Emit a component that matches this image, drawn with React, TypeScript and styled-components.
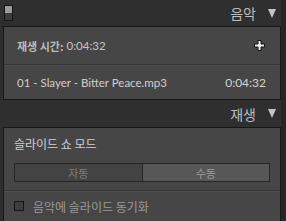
import React from "react";
import styled, { createGlobalStyle } from "styled-components";

const Global = createGlobalStyle`
  html, body { margin: 0; padding: 0; background: #2f2f2f; }
  body { font-family: Lato, "Noto Sans CJK KR", sans-serif; }
`;

const Frame = styled.div`
  width: 286px;
  height: 221px;
  display: flex;
  overflow: hidden;
  background: #2f2f2f;
`;

const Column = styled.div`
  width: 281px;
  padding-left: 3px;
  box-sizing: border-box;
  display: flex;
  flex-direction: column;
`;

const Strip = styled.div`
  width: 5px;
  background: #262626;
`;

const Header = styled.div<{ $h: number }>`
  height: ${(p) => p.$h}px;
  display: flex;
  align-items: center;
  justify-content: space-between;
  padding-right: 5px;
  color: #bdbdbd;
  font-family: "Noto Sans CJK KR", sans-serif;
  font-size: 14px;
`;

const Toggle = styled.div`
  width: 7px;
  height: 14px;
  margin-left: 1px;
  border: 1px solid #151515;
  background: linear-gradient(#9a9a9a 0 50%, #3c3c3c 50% 100%);
`;

const Title = styled.div`
  display: flex;
  align-items: center;
  gap: 12px;
  margin-left: auto;
`;

const Arrow = styled.span`
  width: 0;
  height: 0;
  border-left: 4.5px solid transparent;
  border-right: 4.5px solid transparent;
  border-top: 9px solid #c4c4c4;
`;

const Panel = styled.div<{ $grow?: boolean }>`
  background: #464646;
  border: 1px solid #171717;
  display: flex;
  flex-direction: column;
  ${(p) => (p.$grow ? "flex: 1; border-bottom: none;" : "")}
`;

const Row = styled.div<{ $h: number }>`
  height: ${(p) => p.$h}px;
  display: flex;
  align-items: center;
  padding: 0 14px 0 13px;
  color: #cfcfcf;
  font-family: Lato, "Noto Sans CJK KR", sans-serif;
  font-size: 11.5px;
`;

const Divider = styled.div`
  height: 1px;
  background: #363636;
  box-shadow: 0 1px 0 #505050;
`;

const Label = styled.span`
  font-family: "Noto Sans CJK KR", sans-serif;
  font-size: 11px;
  font-weight: 600;
  color: #bcbcbc;
`;

const Value = styled.span`
  color: #c4c4c4;
  margin-left: 3px;
`;

const Spacer = styled.div`
  flex: 1;
`;

const PlusIcon = () => (
  <svg width="13" height="13" viewBox="0 0 13 13">
    <path
      d="M5 1.5h3v3.5h3.5v3h-3.5v3.5h-3v-3.5h-3.5v-3h3.5z"
      fill="#ececec"
      stroke="#101010"
      strokeWidth="1"
    />
  </svg>
);

const Time = styled.span`
  color: #d4d4d4;
  font-size: 12px;
`;

const ModeTitle = styled.div`
  height: 30px;
  display: flex;
  align-items: center;
  padding-left: 10px;
  color: #d0d0d0;
  font-family: "Noto Sans CJK KR", sans-serif;
  font-size: 12px;
`;

const Segments = styled.div`
  display: flex;
  margin: 5px 10px 8px 10px;
  height: 19px;
`;

const Segment = styled.div<{ $active?: boolean }>`
  flex: 1;
  display: flex;
  align-items: center;
  justify-content: center;
  font-family: "Noto Sans CJK KR", sans-serif;
  font-size: 11px;
  border: 1px solid #262626;
  color: ${(p) => (p.$active ? "#9d9d9d" : "#7e7e7e")};
  background: ${(p) => (p.$active ? "#575757" : "#434343")};
  & + & { border-left: none; }
`;

const CheckRow = styled.div`
  height: 30px;
  display: flex;
  align-items: center;
  padding-left: 10px;
  gap: 9px;
  color: #9a9a9a;
  font-family: "Noto Sans CJK KR", sans-serif;
  font-size: 12px;
`;

const Box = styled.div`
  width: 8px;
  height: 8px;
  border: 1px solid #151515;
  background: #3e3e3e;
`;

export default function App() {
  return (
    <>
      <Global />
      <Frame>
        <Column>
          <Header $h={26}>
            <Toggle />
            <Title>
              음악
              <Arrow />
            </Title>
          </Header>
          <Panel>
            <Row $h={37}>
              <Label>재생 시간:</Label>
              <Value>0:04:32</Value>
              <Spacer />
              <PlusIcon />
            </Row>
            <Divider />
            <Row $h={34}>
              <span>01 - Slayer - Bitter Peace.mp3</span>
              <Spacer />
              <Time>0:04:32</Time>
            </Row>
          </Panel>
          <Header $h={27}>
            <Title>
              재생
              <Arrow />
            </Title>
          </Header>
          <Panel $grow>
            <ModeTitle>슬라이드 쇼 모드</ModeTitle>
            <Segments>
              <Segment>자동</Segment>
              <Segment $active>수동</Segment>
            </Segments>
            <Divider />
            <CheckRow>
              <Box />
              음악에 슬라이드 동기화
            </CheckRow>
          </Panel>
        </Column>
        <Strip />
      </Frame>
    </>
  );
}
